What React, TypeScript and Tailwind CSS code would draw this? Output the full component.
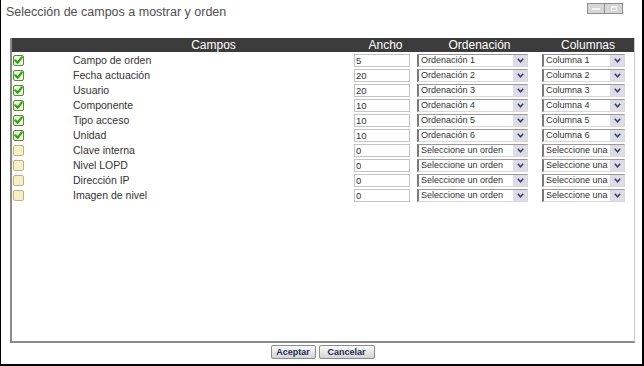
import React from "react";

type Row = { label: string; checked: boolean; ancho: string; orden: string; col: string };

const rows: Row[] = [
  { label: "Campo de orden", checked: true, ancho: "5", orden: "Ordenación 1", col: "Columna 1" },
  { label: "Fecha actuación", checked: true, ancho: "20", orden: "Ordenación 2", col: "Columna 2" },
  { label: "Usuario", checked: true, ancho: "20", orden: "Ordenación 3", col: "Columna 3" },
  { label: "Componente", checked: true, ancho: "10", orden: "Ordenación 4", col: "Columna 4" },
  { label: "Tipo acceso", checked: true, ancho: "10", orden: "Ordenación 5", col: "Columna 5" },
  { label: "Unidad", checked: true, ancho: "10", orden: "Ordenación 6", col: "Columna 6" },
  { label: "Clave interna", checked: false, ancho: "0", orden: "Seleccione un orden", col: "Seleccione una columna" },
  { label: "Nivel LOPD", checked: false, ancho: "0", orden: "Seleccione un orden", col: "Seleccione una columna" },
  { label: "Dirección IP", checked: false, ancho: "0", orden: "Seleccione un orden", col: "Seleccione una columna" },
  { label: "Imagen de nivel", checked: false, ancho: "0", orden: "Seleccione un orden", col: "Seleccione una columna" },
];

function Check({ checked }: { checked: boolean }) {
  return (
    <svg width="11" height="11" viewBox="0 0 11 11">
      <rect x="0.5" y="0.5" width="10" height="10" rx="1.5" fill={checked ? "#eef6dc" : "#f6f0c4"} stroke={checked ? "#5a8a3a" : "#b9b48a"} />
      {checked && <path d="M2.3 5.3 L4.6 7.8 L8.8 2.4" fill="none" stroke="#2fa21c" strokeWidth="2.2" strokeLinecap="round" strokeLinejoin="round" />}
    </svg>
  );
}

function Arrow() {
  return (
    <div className="absolute right-0 top-0 h-full w-[14px] bg-[#dcdde8] flex items-center justify-center">
      <svg width="7" height="5" viewBox="0 0 7 5">
        <path d="M0.8 0.8 L3.5 3.8 L6.2 0.8" fill="none" stroke="#3a3f5a" strokeWidth="1.5" />
      </svg>
    </div>
  );
}

function Select({ text, width }: { text: string; width: string }) {
  return (
    <div className={`relative h-[13px] ${width} bg-white border-l-2 border-l-[#7a7a7a] border-t border-t-[#9a9a9a] border-r border-r-[#d8d8d8] border-b border-b-[#d8d8d8] overflow-hidden`}>
      <div className="pl-[2px] text-[9px] leading-[11px] text-[#333] whitespace-nowrap">{text}</div>
      <Arrow />
    </div>
  );
}

export default function App() {
  const font = { fontFamily: '"Liberation Sans", Arial, sans-serif' };
  return (
    <div className="w-[644px] h-[366px] bg-white border-l border-l-black border-r-2 border-r-black border-b-2 border-b-black flex flex-col overflow-hidden" style={font}>
      <div className="h-[38px] flex justify-between items-start shrink-0">
        <div className="pl-[5px] pt-[3px] text-[12.5px] leading-[18px] text-[#505050]">Selección de campos a mostrar y orden</div>
        <div className="flex mt-[3px] mr-[19px]">
          <div className="w-[18px] h-[11px] bg-[#d6d6d6] border border-[#8e8e8e] flex items-center justify-center">
            <div className="w-[8px] h-[2px] bg-[#f4f4f4]" />
          </div>
          <div className="w-[18px] h-[11px] bg-[#d6d6d6] border border-l-0 border-[#8e8e8e] flex items-center justify-center">
            <div className="w-[6px] h-[5px] border border-[#f4f4f4] border-t-2" />
          </div>
        </div>
      </div>
      <div className="ml-[9px] w-[625px] h-[305px] shrink-0 border-l-2 border-l-[#8a8a8a] border-b-2 border-b-[#8a8a8a] border-r border-r-[#c8c8c8] bg-white">
        <div className="grid grid-cols-[61px_281px_63px_125px_1fr] h-[14px] bg-[#3c3c3c] text-white text-[12px] leading-[14px]">
          <div />
          <div className="text-center">Campos</div>
          <div className="text-center">Ancho</div>
          <div className="text-center">Ordenación</div>
          <div className="text-center">Columnas</div>
        </div>
        <div className="pt-[1px]">
          {rows.map((r, i) => (
            <div key={i} className="grid grid-cols-[61px_281px_63px_125px_1fr] h-[15px] items-center">
              <div className="pl-[1px] flex items-center"><Check checked={r.checked} /></div>
              <div className="text-[10.5px] leading-[13px] text-[#333]">{r.label}</div>
              <div>
                <div className="w-[56px] h-[13px] border border-[#c4c4c4] bg-white pl-[1px] text-[9.5px] leading-[11px] text-[#333]">{r.ancho}</div>
              </div>
              <div><Select text={r.orden} width="w-[111px]" /></div>
              <div><Select text={r.col} width="w-[83px]" /></div>
            </div>
          ))}
        </div>
      </div>
      <div className="flex justify-center gap-[3px] pt-[2px] pl-[2px]">
        <button className="w-[45px] h-[14px] rounded-[2px] border border-[#8c8c8c] bg-gradient-to-b from-[#fafafa] to-[#d4d4d4] text-[9px] font-bold leading-[12px] text-[#1d2c55]">Aceptar</button>
        <button className="w-[56px] h-[14px] rounded-[2px] border border-[#8c8c8c] bg-gradient-to-b from-[#fafafa] to-[#d4d4d4] text-[9px] font-bold leading-[12px] text-[#1d2c55]">Cancelar</button>
      </div>
    </div>
  );
}
